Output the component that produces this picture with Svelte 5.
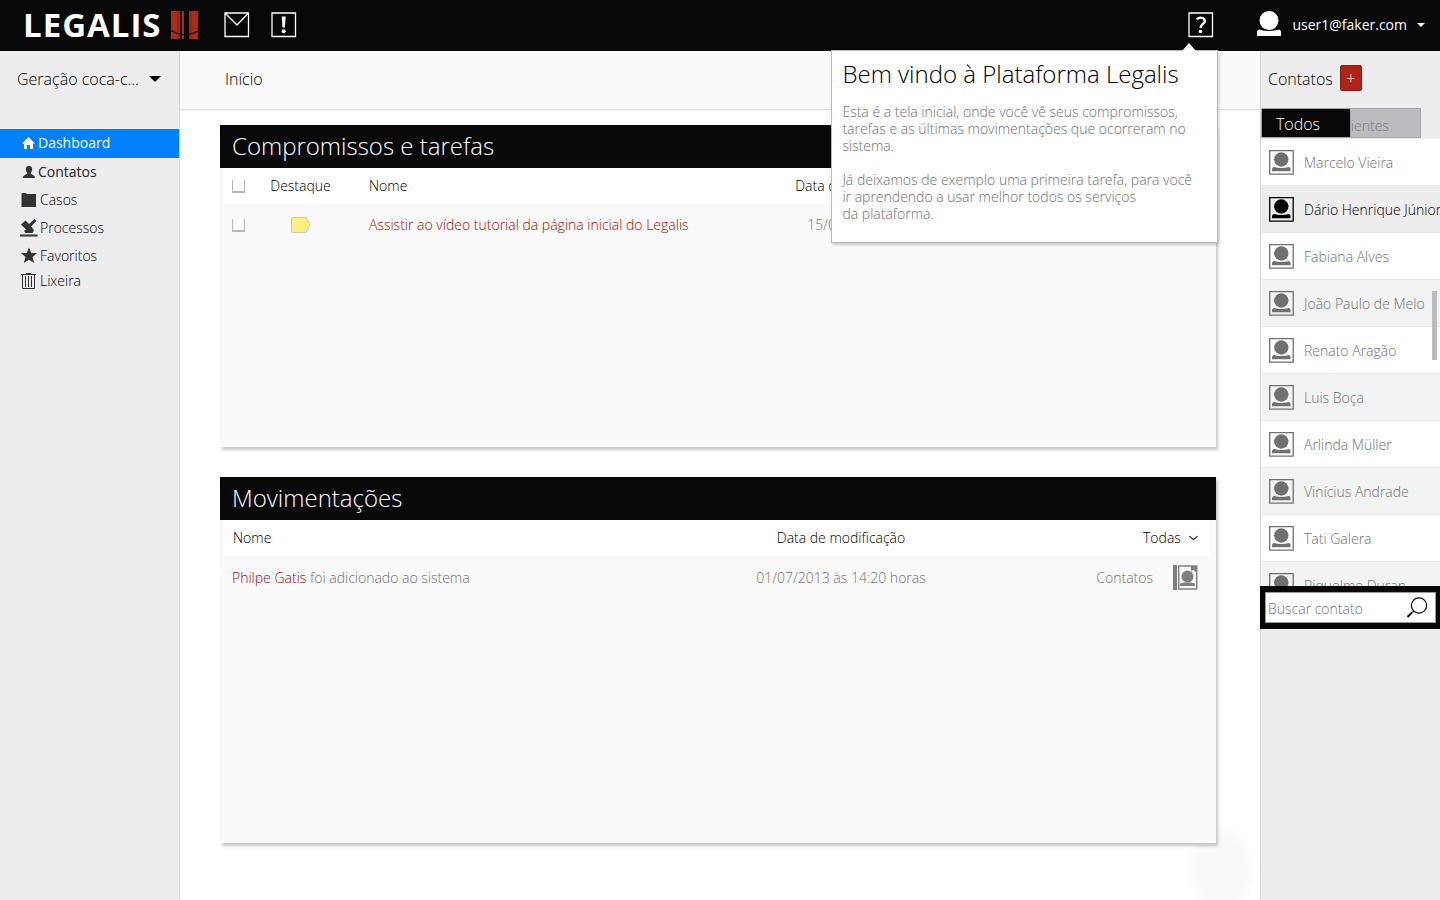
<script>
  const contacts = [
    'Marcelo Vieira',
    'Dário Henrique Júnior',
    'Fabiana Alves',
    'João Paulo de Melo',
    'Renato Aragão',
    'Luis Boça',
    'Arlinda Müller',
    'Vinícius Andrade',
    'Tati Galera',
    'Riquelme Duran'
  ];
  let selected = $state(1);
  let search = $state('');
</script>

<div class="page">
  <header class="topbar">
    <a class="brand" href="#inicio">
      <span>LEGALIS</span>
      <svg width="28" height="28" viewBox="0 0 28 28" aria-hidden="true">
        <path fill="#b02a1a" d="M0 0h9v28H0zM11 0h2v28h-2zM18 0h9v28h-9z" />
        <path fill="#861208" d="M6 0h3v28H6zM18 0h3v28h-3z" opacity=".3" />
        <path fill="none" stroke="#080808" stroke-width="1.2" d="M0 19.500Q6 23 11 23.500H17Q22 23 28 19.500" />
      </svg>
    </a>
    <button class="icon" aria-label="Mensagens">
      <svg width="26" height="26" viewBox="0 0 26 26"><path class="line" d="M1 1h23.500v23.500H1zM1 1l12 12L24.500 1" /></svg>
    </button>
    <button class="icon alert" aria-label="Alertas">
      <svg width="26" height="26" viewBox="0 0 26 26"><path class="line" d="M1 1h23.500v23.500H1z" /><path fill="#fff" d="M10.700 4.500h4l-.8 11h-2.400z" /><circle cx="12.700" cy="19.300" r="2" fill="#fff" /></svg>
    </button>
    <div class="help">
      <button class="icon" aria-label="Ajuda">
        <svg width="26" height="26" viewBox="0 0 26 26"><path class="line" d="M1 1h23.500v23.500H1z" /><path fill="none" stroke="#fff" stroke-width="2.400" d="M8.800 7.200C11 5.200 16.800 5 16.800 9C16.800 12 12.500 12 12.500 16" /><circle cx="12.500" cy="19.500" r="1.800" fill="#fff" /></svg>
      </button>
      <section class="tip">
        <h2>Bem vindo à Plataforma Legalis</h2>
        <p>Esta é a tela inicial, onde você vê seus compromissos, tarefas e as últimas movimentações que ocorreram no sistema.</p>
        <p>Já deixamos de exemplo uma primeira tarefa, para você<br />ir aprendendo a usar melhor todos os serviços<br />da plataforma.</p>
      </section>
    </div>
    <button class="user">
      <svg width="26" height="26" viewBox="0 0 26 26" aria-hidden="true"><circle cx="13" cy="9.500" r="9.500" fill="#fff" /><path fill="#fff" d="M3 18.500Q13 21.500 23 18.500Q25 19 25 21v4H1v-4Q1 19 3 18.500z" /></svg>
      <span>user1@faker.com</span>
      <svg width="8" height="4" viewBox="0 0 8 4" aria-hidden="true"><path fill="#fff" d="M0 0h8L4 4z" /></svg>
    </button>
  </header>

  <div class="body">
    <aside class="left">
      <div class="account">
        <select aria-label="Escritório"><option>Geração coca-c...</option></select>
        <svg width="12" height="6" viewBox="0 0 12 6" aria-hidden="true"><path d="M0 0h12L6 6z" /></svg>
      </div>
      <nav>
        <a href="#dashboard" class="active">
          <svg width="16" height="16" viewBox="0 0 16 16"><path fill="#fff" d="M8.500 2L15 8.500h-2V14h-3v-4H7v4H4V8.500H2z" /></svg>
          <span>Dashboard</span>
        </a>
        <a href="#contatos" class="hover">
          <svg width="16" height="16" viewBox="0 0 16 16"><path d="M9 2c2.200 0 3.400 1.400 3.200 3.500C12 7 11.200 8 10.800 9c0 2 4.200 1.500 4.200 5H3c0-3.500 4.200-3 4.200-5C6.800 8 6 7 5.800 5.500C5.600 3.400 6.800 2 9 2z" /></svg>
          <span>Contatos</span>
        </a>
        <a href="#casos">
          <svg width="18" height="16" viewBox="0 0 18 16"><path d="M1.500 2q0-1 1-1h3q1 0 1 1h9.500v13H1.500z" /></svg>
          <span>Casos</span>
        </a>
        <a href="#processos">
          <svg width="18" height="18" viewBox="0 0 18 18"><path d="M0 15.500h17.500v2H0zM1 5.500L5.500 1.500L9 5L14.500 0L16.500 1.800L11 7.500L14 11L12.500 14H5.500L4 12L6 10.500z" /></svg>
          <span>Processos</span>
        </a>
        <a href="#favoritos">
          <svg width="18" height="18" viewBox="0 0 18 18"><path d="M9 .5l2.300 5.500H17l-4.500 4 1.700 6L9 12.800 3.800 16l1.700-6L1 6h5.700z" /></svg>
          <span>Favoritos</span>
        </a>
        <a href="#lixeira">
          <svg width="18" height="18" viewBox="0 0 18 18"><path fill="none" stroke="#333" d="M1 2.500h15M6 1.500h5M2.500 3v13.500h12V3M5.500 4v11M8.500 4v11M11.500 4v11" /></svg>
          <span>Lixeira</span>
        </a>
      </nav>
    </aside>

    <main>
      <div class="crumb">Início</div>
      <div class="content">
        <section class="panel">
          <h1>Compromissos e tarefas</h1>
          <table>
            <thead>
              <tr>
                <th class="check"><input type="checkbox" aria-label="Selecionar todas" /></th>
                <th class="flag">Destaque</th>
                <th>Nome</th>
                <th class="created">Data de criação</th>
                <th class="rest"></th>
              </tr>
            </thead>
            <tbody>
              <tr>
                <td class="check"><input type="checkbox" aria-label="Selecionar tarefa" /></td>
                <td class="flag"><svg width="20" height="16" viewBox="0 0 20 16"><path fill="#fff07c" stroke="#c8c8be" d="M1.500.5H15l4 7.500-4 7.500H1.500q-1 0-1-1v-13q0-1 1-1z" /></svg></td>
                <td><a href="#tarefa">Assistir ao vídeo tutorial da página inicial do Legalis</a></td>
                <td class="created">15/07/2013</td>
                <td class="rest"></td>
              </tr>
            </tbody>
          </table>
        </section>

        <section class="panel moves">
          <h1>Movimentações</h1>
          <table>
            <thead>
              <tr>
                <th class="what">Nome</th>
                <th class="date">Data de modificação</th>
                <th class="kind">
                  <div class="filter">
                    <select aria-label="Filtrar movimentações"><option>Todas</option></select>
                    <svg width="9" height="6" viewBox="0 0 9 6" aria-hidden="true"><path fill="none" stroke="#222" stroke-width="1.200" d="M.5 1Q2 3 4.500 4.500Q7 3 8.500 1" /></svg>
                  </div>
                </th>
              </tr>
            </thead>
            <tbody>
              <tr>
                <td class="what"><a href="#philpe">Philpe Gatis</a> foi adicionado ao sistema</td>
                <td class="date">01/07/2013 às 14:20 horas</td>
                <td class="kind">
                  <div class="source">
                    <span>Contatos</span>
                    <svg width="25" height="25" viewBox="0 0 25 25" aria-hidden="true"><path fill="#808080" d="M0 0h4v25H0zM18 1h5v6l-2.500-2L18 6zM7 18.500Q14 16 22 18.500v2.500H7z" /><path fill="none" stroke="#808080" stroke-width="1.500" d="M5.700 1h18v23h-18z" /><circle cx="14.500" cy="11.500" r="6" fill="#808080" /></svg>
                  </div>
                </td>
              </tr>
            </tbody>
          </table>
        </section>
      </div>
    </main>

    <aside class="right">
      <div class="title"><span>Contatos</span><button class="add" aria-label="Adicionar contato">+</button></div>
      <div class="tabs">
        <button class="on">Todos</button><button class="off">Clientes</button>
      </div>
      <div class="scroller">
        <ul>
          {#each contacts as name, i}
            <li>
              <button class="contact" class:selected={selected === i} onclick={() => (selected = i)}>
                <svg width="25" height="25" viewBox="0 0 25 25" aria-hidden="true"><path fill="none" stroke="currentColor" stroke-width="1.300" d="M.7.7h23.500v23.500H.7z" /><circle cx="12.300" cy="9.500" r="7.200" fill="currentColor" /><path fill="currentColor" d="M5 17Q12.500 19 20 17Q21.500 17.500 21.500 19v2.300H3V19Q3 17.500 5 17z" /></svg>
                <span>{name}</span>
              </button>
            </li>
          {/each}
        </ul>
        <div class="thumb"></div>
      </div>
      <label class="search">
        <input type="text" placeholder="Buscar contato" aria-label="Buscar contato" bind:value={search} />
        <svg width="22" height="22" viewBox="0 0 22 22" aria-hidden="true"><circle cx="13" cy="8.500" r="7.600" /><path d="M8 14L6.500 15.500" /><path stroke-width="2" d="M6 15.500L1.500 20" /></svg>
      </label>
    </aside>
  </div>
</div>

<style>
  :global(body) { background: #fff; }
  .page {
    min-height: 100vh;
    display: flex;
    flex-direction: column;
    font: 300 14px/20px "Open Sans", "Noto Sans", sans-serif;
    color: #000;
  }
  .page * { box-sizing: border-box; }
  button, select, input { font: inherit; color: inherit; }
  button { border: 0; padding: 0; background: none; cursor: pointer; }
  select { appearance: none; border: 0; padding: 0; background: none; }
  a { color: #a80c04; text-decoration: none; }
  svg { display: block; flex: none; }
  h1, h2, p, ul { margin: 0; padding: 0; font-weight: 300; }

  .topbar {
    height: 51px;
    display: flex;
    align-items: center;
    padding: 0 15px 1px 23px;
    background: #080808;
    color: #fff;
  }
  .brand { display: flex; align-items: center; gap: 9px; margin-right: 25px; color: #fff; }
  .brand span { font-size: 33px; line-height: 48px; font-weight: 700; letter-spacing: 1px; }
  .icon { color: #fff; }
  .alert { margin-left: 21px; }
  .line { fill: none; stroke: #fff; stroke-width: 1.300; }
  .help { display: flex; position: relative; margin-left: auto; }
  .user { display: flex; align-items: center; gap: 10px; margin-left: 42px; font-weight: 500; }
  .user svg:first-child { margin-bottom: 2px; }

  .tip {
    position: absolute;
    z-index: 3;
    top: 38px;
    right: -4px;
    width: 387px;
    padding: 6px 18px 20px 10px;
    border: 1px solid #bbb;
    background: #fff;
    color: #707070;
    line-height: 17px;
    box-shadow: 1px 2px 3px rgba(0, 0, 0, .2);
  }
  .tip::before {
    content: "";
    position: absolute;
    top: -8px;
    right: 21px;
    border: solid transparent;
    border-width: 0 7px 8px;
    border-bottom-color: #fff;
  }
  .tip h2 { color: #000; font-size: 24px; line-height: 34px; margin-bottom: 12px; }
  .tip p + p { margin-top: 17px; }

  .body { flex: 1; display: grid; grid-template-columns: 180px minmax(0, 1fr) 180px; }
  .left { background: #ededed; border-right: 1px solid #d6d6d6; }
  .account { display: flex; align-items: center; gap: 10px; height: 57px; padding: 0 0 1px 17px; font-size: 16px; }
  nav { margin-top: 21px; }
  nav a { display: flex; align-items: center; height: 28px; padding-left: 20px; gap: 2px; color: #000; }
  nav a:last-child { height: 22px; }
  nav svg { fill: #333; }
  nav .active { height: 29px; padding-bottom: 2px; background: #007fff; color: #fff; font-weight: 500; }
  nav .hover { font-weight: 400; color: #222; }

  main { background: radial-gradient(ellipse 36px 46px at calc(100% - 39px) calc(100% - 31px), #f9f9f9 70%, #fff 100%); }
  .crumb {
    height: 59px;
    padding: 18px 45px;
    border-bottom: 1px solid #dedede;
    background: #fafafa;
    font-size: 16px;
    box-shadow: 0 1px 2px rgba(0, 0, 0, .06);
  }
  .content { display: flex; flex-direction: column; gap: 30px; padding: 15px 44px 57px 40px; }
  .panel { min-height: 322px; background: #fafafa; box-shadow: 2px 3px 3px rgba(0, 0, 0, .22); }
  .moves { min-height: 366px; }
  h1 { height: 43px; padding: 0 12px; background: #080808; color: #fff; font-size: 24px; line-height: 42px; }
  table { width: 100%; border-spacing: 0; table-layout: fixed; }
  th, td { padding: 0; text-align: left; font-weight: 300; }
  th { height: 36px; background: #fff; }
  td { height: 42px; color: #707070; }
  th:first-child { border-left: 4px solid #fafafa; }
  th:last-child { border-right: 6px solid #fafafa; }
  .check { width: 40px; padding-left: 12px; }
  th.check { padding-left: 8px; }
  .check input {
    appearance: none;
    display: block;
    width: 13px;
    height: 13px;
    margin: 0;
    border: solid #b5b5b5;
    border-width: 0 1px 2px;
    background: #fff;
  }
  .flag { width: 109px; padding-right: 28px; text-align: center; }
  .flag svg { margin: 0 auto; }
  .created { width: 120px; text-align: center; }
  .rest { width: 312px; }
  .what { padding-left: 12px; }
  th.what { padding-left: 9px; }
  .date { width: 200px; text-align: center; }
  .kind { width: 275px; padding-right: 18px; }
  th.kind { padding-right: 12px; }
  .moves td { height: 43px; }
  .filter, .source { display: flex; align-items: center; justify-content: flex-end; gap: 8px; }
  .source { gap: 20px; }

  .right { background: #ededed; border-left: 1px solid #d6d6d6; }
  .title { display: flex; align-items: center; gap: 7px; height: 57px; padding: 0 0 3px 7px; font-size: 16px; }
  .title span { padding-top: 2px; }
  .add { width: 22px; height: 26px; border: 1px solid #8c1a10; border-radius: 2px; background: #b02318; color: #fff; line-height: 22px; }
  .tabs { display: flex; height: 31px; padding-right: 19px; }
  .tabs button { height: 30px; border: 1px solid #a7a7aa; }
  .tabs .on { position: relative; z-index: 1; width: 90px; padding: 2px 16px 0 0; background: #080808; color: #fff; font-size: 16px; }
  .tabs .off { flex: 1; margin-left: -24px; padding: 6px 0 0 11px; background: #bbbcbe; color: #808080; text-align: left; }
  .scroller { position: relative; height: 447px; overflow: hidden; }
  ul { list-style: none; }
  .contact {
    display: flex;
    align-items: center;
    gap: 10px;
    width: 100%;
    height: 47px;
    padding: 0 0 0 8px;
    border-bottom: 1px solid #eaeaea;
    background: #fff;
    color: #707070;
    white-space: nowrap;
    overflow: hidden;
  }
  .contact span { padding-top: 2px; }
  li:nth-child(even) .contact { background: #f2f4f3; }
  li .contact.selected, li:nth-child(even) .contact.selected { background: #ededed; color: #000; }
  .thumb { position: absolute; right: 3px; top: 152px; width: 5px; height: 69px; background: #bbbcbe; }
  .search { display: flex; align-items: center; height: 43px; margin-left: -1px; padding: 6px 4px 6px 5px; background: #080808; position: relative; }
  .search input { width: 100%; height: 31px; border: 1px solid #999; padding: 2px 34px 0 2px; background: #fff; outline: 0; font-weight: 300; }
  .search input::placeholder { color: #707070; opacity: 1; }
  .search svg { position: absolute; right: 12px; top: 11px; fill: none; stroke: #080808; stroke-width: 1.200; }
</style>
